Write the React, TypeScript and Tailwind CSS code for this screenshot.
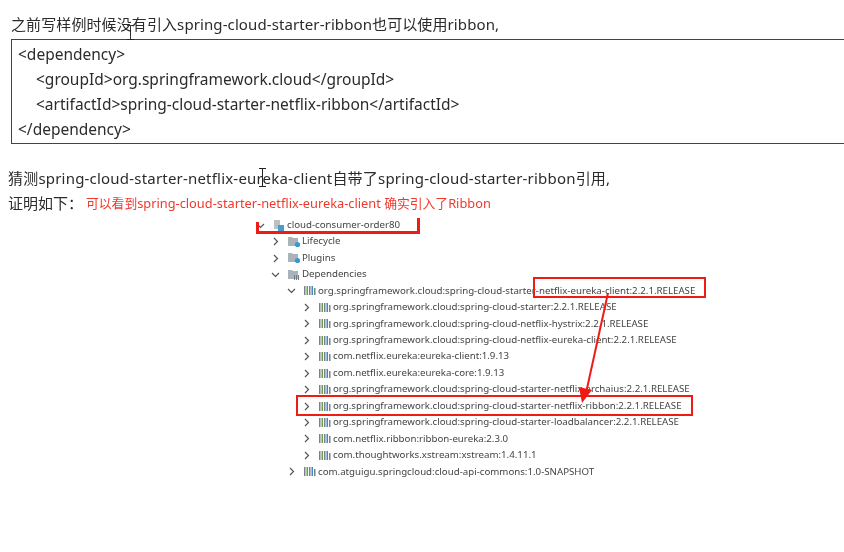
const rows: { label: string; level: number; open?: boolean; kind?: "module" | "folder" | "dep" | "gear" }[] = [
  { label: "cloud-consumer-order80", level: 0, open: true, kind: "module" },
  { label: "Lifecycle", level: 1, kind: "gear" },
  { label: "Plugins", level: 1, kind: "gear" },
  { label: "Dependencies", level: 1, open: true, kind: "folder" },
  { label: "org.springframework.cloud:spring-cloud-starter-netflix-eureka-client:2.2.1.RELEASE", level: 2, open: true },
  { label: "org.springframework.cloud:spring-cloud-starter:2.2.1.RELEASE", level: 3 },
  { label: "org.springframework.cloud:spring-cloud-netflix-hystrix:2.2.1.RELEASE", level: 3 },
  { label: "org.springframework.cloud:spring-cloud-netflix-eureka-client:2.2.1.RELEASE", level: 3 },
  { label: "com.netflix.eureka:eureka-client:1.9.13", level: 3 },
  { label: "com.netflix.eureka:eureka-core:1.9.13", level: 3 },
  { label: "org.springframework.cloud:spring-cloud-starter-netflix-archaius:2.2.1.RELEASE", level: 3 },
  { label: "org.springframework.cloud:spring-cloud-starter-netflix-ribbon:2.2.1.RELEASE", level: 3 },
  { label: "org.springframework.cloud:spring-cloud-starter-loadbalancer:2.2.1.RELEASE", level: 3 },
  { label: "com.netflix.ribbon:ribbon-eureka:2.3.0", level: 3 },
  { label: "com.thoughtworks.xstream:xstream:1.4.11.1", level: 3 },
  { label: "com.atguigu.springcloud:cloud-api-commons:1.0-SNAPSHOT", level: 2 },
];

function Chevron({ open }: { open?: boolean }) {
  return (
    <svg width="9" height="9" viewBox="0 0 9 9" className="shrink-0" fill="none" stroke="#555" strokeWidth="1.2">
      {open ? <path d="M1 3l3.5 3.5L8 3" /> : <path d="M3 1l3.5 3.5L3 8" />}
    </svg>
  );
}

function TreeIcon({ kind }: { kind?: string }) {
  if (kind === "module") {
    return (
      <svg width="12" height="12" viewBox="0 0 12 12" className="shrink-0">
        <rect x="1" y="1" width="6" height="9" fill="#b9c0c6" />
        <rect x="5" y="6" width="6" height="6" fill="#4a9cc9" />
      </svg>
    );
  }
  if (kind === "folder" || kind === "gear") {
    return (
      <svg width="13" height="12" viewBox="0 0 13 12" className="shrink-0">
        <path d="M0 1h4l1 1h5v8H0z" fill="#aab3ba" />
        {kind === "gear" ? (
          <circle cx="9.5" cy="8.5" r="2.6" fill="#3f97d0" />
        ) : (
          <path d="M6 6h1v5H6zM8 6h1v5H8zM10 6h1v5h-1z" fill="#6f7f8b" />
        )}
      </svg>
    );
  }
  return (
    <svg width="12" height="11" viewBox="0 0 12 11" className="shrink-0">
      <path d="M0 1h1.5v9H0z" fill="#77828a" />
      <path d="M2.5 1H4v9H2.5z" fill="#6f9c4c" />
      <path d="M5 1h1.5v9H5z" fill="#77828a" />
      <path d="M7.5 1H9v9H7.5z" fill="#3f8ac0" />
      <path d="M10 3h1.5v7H10z" fill="#77828a" />
    </svg>
  );
}

function Cursor({ className }: { className: string }) {
  return (
    <svg viewBox="0 0 9 18" preserveAspectRatio="none" fill="none" stroke="#222" strokeWidth="1" className={`absolute w-[9px] ${className}`}>
      <path d="M1 .5h7M4.5.5v17M1 17.5h7" />
    </svg>
  );
}

export default function App() {
  return (
    <div className="relative h-[552px] w-[844px] overflow-hidden bg-white text-[#333] [font-family:'Noto_Sans','Noto_Sans_CJK_SC',sans-serif]">
      <div className="blur-[0.3px]">
        <p className="pl-[11px] pt-[12px] text-[15px] leading-[24px] tracking-[0.1px] text-[#2b2b2b]">
          之前写样例时候没有引入spring-cloud-starter-ribbon也可以使用ribbon,
        </p>
        <div className="-mr-[2px] ml-[11px] mt-[3px] h-[105px] border border-[#444] pl-[6px] pt-[2px] text-[15.5px] leading-[25px] text-[#2b2b2b]">
          <div>&lt;dependency&gt;</div>
          <div className="pl-[18px]">&lt;groupId&gt;org.springframework.cloud&lt;/groupId&gt;</div>
          <div className="pl-[18px]">&lt;artifactId&gt;spring-cloud-starter-netflix-ribbon&lt;/artifactId&gt;</div>
          <div>&lt;/dependency&gt;</div>
        </div>
        <p className="mt-[22px] pl-[8px] text-[15px] leading-[25px] tracking-[0.2px] text-[#2b2b2b]">
          猜测spring-cloud-starter-netflix-eureka-client自带了spring-cloud-starter-ribbon引用,
        </p>
        <div className="flex items-center pl-[8px] leading-[25px] text-[#2b2b2b]">
          <span className="w-[78px] text-[15px]">证明如下：</span>
          <span className="text-[12.8px] text-[#f0382c]">可以看到spring-cloud-starter-netflix-eureka-client 确实引入了Ribbon</span>
        </div>
        <div className="ml-[255px] mt-[1px] text-[9.7px] text-[#444]">
          {rows.map((row) => (
            <div key={row.label} className="flex h-[16.45px] items-center whitespace-nowrap">
              <div
                className={
                  row.level === 0 ? "w-0" : row.level === 1 ? "w-[15px]" : row.level === 2 ? "w-[31px]" : "w-[46px]"
                }
              />
              <div className="flex w-[18px] shrink-0 justify-start pl-[1px]">
                <Chevron open={row.open} />
              </div>
              <div className="w-[12px] shrink-0">
                <TreeIcon kind={row.kind} />
              </div>
              <span className="pl-[2px]">{row.label}</span>
            </div>
          ))}
        </div>
      </div>

      {/* Hand-drawn annotations on top of the screenshot */}
      <div className="absolute left-[256px] top-[222px] h-[12px] w-[164px] border-b-[3px] border-l-[3px] border-[#ee1c14]" />
      <div className="absolute left-[417px] top-[218px] h-[16px] w-[3px] bg-[#ee1c14]" />
      <div className="absolute left-[533px] top-[277px] h-[21px] w-[173px] border-2 border-[#ee1c14]" />
      <div className="absolute left-[296px] top-[395px] h-[21px] w-[397px] border-2 border-[#ee1c14]" />
      <svg className="absolute left-[570px] top-[285px]" width="50" height="125" viewBox="0 0 50 125" fill="none">
        <path d="M38 8L16 108" stroke="#ee1c14" strokeWidth="2" />
        <path d="M12 118L9 102L22 105Z" fill="#ee1c14" />
      </svg>
      <Cursor className="left-[126px] top-[25px] h-[15px]" />
      <Cursor className="left-[258px] top-[168px] h-[19px]" />
    </div>
  );
}
